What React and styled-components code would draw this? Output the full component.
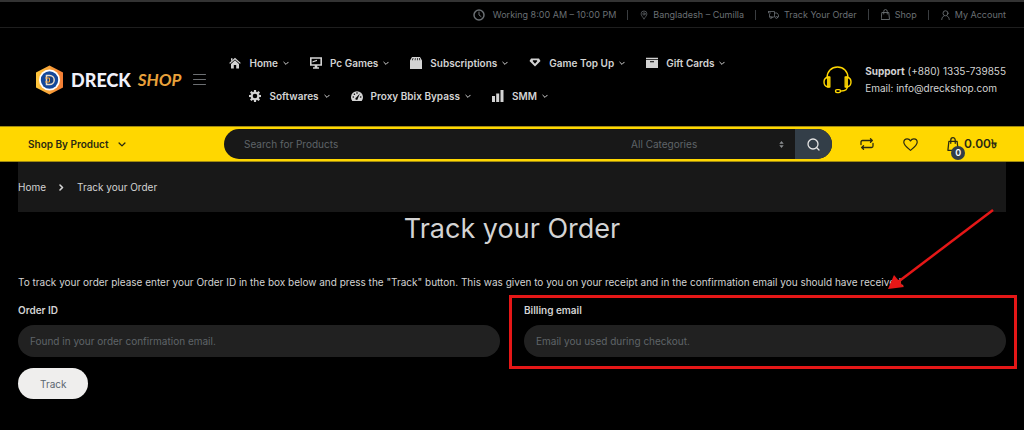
import React from 'react';
import styled, { createGlobalStyle } from 'styled-components';

const COLORS = {
  black: '#000',
  yellow: '#ffd700',
  gold: '#a08a10',
  panel: '#181818',
  field: '#212121',
  line: '#1e1e1e',
  slate: '#333e48',
  muted: '#5f6468',
  text: '#d3d3d3',
  dark: '#2a2a12',
  red: '#e51717',
};

const GlobalStyle = createGlobalStyle`
  * {
    box-sizing: border-box;
  }

  body {
    margin: 0;
    background-color: ${COLORS.black};
    color: ${COLORS.text};
    font-family: Inter, "Liberation Sans", sans-serif;
    font-size: 10px;
    line-height: 16px;
  }

  a {
    color: inherit;
    text-decoration: none;
  }

  svg {
    display: block;
    flex-shrink: 0;
  }

  button, input, select {
    font-family: inherit;
    font-size: inherit;
    margin: 0;
  }
`;

const TopBar = styled.div`
  display: flex;
  justify-content: flex-end;
  align-items: center;
  height: 28px;
  padding: 0 18px;
  border-top: 2px solid #333;
  border-bottom: 1px solid ${COLORS.line};
  color: #6a6f73;
  font-size: 9px;
`;

const TopItem = styled.a`
  display: flex;
  align-items: center;
  gap: ${({ wide }) => wide ? 8 : 5}px;

  & + & {
    margin-left: 11px;
    padding-left: 12px;
    border-left: 1px solid #3a3d40;
    line-height: 10px;
  }
`;

const Masthead = styled.header`
  display: flex;
  align-items: center;
  height: 98px;
  padding: 5px 18px 0;
`;

const Logo = styled.a`
  display: flex;
  align-items: center;
  margin-left: 17px;
  line-height: 30px;
`;

const LogoName = styled.span`
  margin-left: 7px;
  color: #f1f1fa;
  font-family: Lato, sans-serif;
  font-size: 18px;
  font-weight: 900;
`;

const LogoShop = styled.span`
  margin-left: 7px;
  color: #e9a23b;
  font-family: Lato, sans-serif;
  font-size: 17px;
  font-style: italic;
  font-weight: 700;
`;

const MenuButton = styled.button`
  display: flex;
  margin-left: 12px;
  padding: 0;
  border: 0;
  background: none;
  color: #6c6f72;
`;

const Nav = styled.nav`
  display: grid;
  gap: 17px;
  margin-left: 23px;
`;

const NavRow = styled.ul`
  display: flex;
  gap: 21px;
  margin: 0;
  padding: 0 0 0 ${({ indent }) => indent ? 20 : 0}px;
  list-style: none;
`;

const NavLink = styled.a`
  display: flex;
  align-items: center;
  font-weight: 600;

  span {
    margin: 0 5px 0 8px;
  }
`;

const Support = styled.div`
  display: flex;
  align-items: center;
  gap: 13px;
  margin-left: auto;

  svg {
    color: ${COLORS.yellow};
  }

  p {
    margin: 0;
    line-height: 17px;
  }
`;

const ActionBar = styled.div`
  display: flex;
  align-items: center;
  height: 36px;
  padding: 0 27px 0 28px;
  border-top: 1px solid ${COLORS.gold};
  border-bottom: 1px solid ${COLORS.gold};
  background-color: ${COLORS.yellow};
  color: ${COLORS.dark};
`;

const Departments = styled.button`
  display: flex;
  align-items: center;
  justify-content: space-between;
  width: 98px;
  padding: 0;
  border: 0;
  background: none;
  color: inherit;
  font-weight: 600;
`;

const Search = styled.form`
  display: flex;
  flex: 1;
  height: 30px;
  margin: 0 28px 0 98px;
  overflow: hidden;
  border-radius: 15px;
  background-color: ${COLORS.panel};
`;

const SearchInput = styled.input`
  flex: 1;
  min-width: 0;
  padding: 0 20px;
  border: 0;
  background: none;
  color: ${COLORS.muted};

  &::placeholder {
    color: ${COLORS.muted};
    opacity: 1;
  }
`;

const Category = styled.div`
  display: flex;
  align-items: center;
  width: 164px;
  padding-right: 11px;
  color: ${COLORS.muted};
`;

const CategorySelect = styled.select`
  flex: 1;
  padding: 0;
  border: 0;
  appearance: none;
  background: none;
  color: inherit;
`;

const SearchButton = styled.button`
  display: flex;
  align-items: center;
  justify-content: center;
  width: 37px;
  padding: 0;
  border: 0;
  background-color: ${COLORS.slate};
  color: #e4e4e4;
`;

const Actions = styled.div`
  display: flex;
  align-items: center;
  gap: 29px;
`;

const Cart = styled.a`
  position: relative;
  display: flex;
  align-items: center;
  gap: 5px;
  font-size: 12px;
  font-weight: 600;
`;

const CartCount = styled.span`
  position: absolute;
  top: 10px;
  left: 4px;
  width: 14px;
  height: 14px;
  border-radius: 50%;
  background-color: ${COLORS.slate};
  color: #fff;
  font-size: 9px;
  line-height: 14px;
  text-align: center;
`;

const Page = styled.main`
  position: relative;
  padding: 0 18px 30px;
`;

const Breadcrumb = styled.nav`
  display: flex;
  align-items: center;
  gap: 13px;
  height: 50px;
  background-color: ${COLORS.panel};
`;

const Title = styled.h1`
  margin: 0;
  font-size: 27px;
  font-weight: 400;
  line-height: 34px;
  text-align: center;
`;

const Intro = styled.p`
  margin: 28px 0 12px;
`;

const Fields = styled.div`
  display: grid;
  grid-template-columns: 1fr 1fr;
  gap: 24px;
`;

const Field = styled.div`
  position: relative;
  display: grid;
  gap: 7px;

  label {
    font-weight: 600;
  }
`;

const FieldInput = styled.input`
  width: 100%;
  height: 32px;
  padding: 0 12px;
  border: 0;
  border-radius: 16px;
  background-color: ${COLORS.field};
  color: ${COLORS.text};

  &::placeholder {
    color: ${COLORS.muted};
    opacity: 1;
  }
`;

const Highlight = styled.div`
  position: absolute;
  inset: -7px -11px -12px -15px;
  border: 3px solid ${COLORS.red};
  pointer-events: none;
`;

const Arrow = styled.svg`
  position: absolute;
  top: 46px;
  right: 28px;
  pointer-events: none;
`;

const TrackButton = styled.button`
  height: 31px;
  margin-top: 11px;
  padding: 0 22px;
  border: 0;
  border-radius: 16px;
  background-color: #efeeed;
  color: #5a6670;
`;

const Line = ({ w = 12, h = w, box = '0 0 24 24', stroke = 2, children }) => (
  <svg width={w} height={h} viewBox={box} fill="none" stroke="currentColor" strokeWidth={stroke} strokeLinecap="round" strokeLinejoin="round" aria-hidden="true">
    {children}
  </svg>
);

const Solid = ({ children }) => (
  <svg width="12" height="12" viewBox="0 0 12 12" fill="currentColor" aria-hidden="true">
    {children}
  </svg>
);

const Chevron = ({ size = 6 }) => (
  <Line w={size} h={size} box="0 0 6 6" stroke={1}>
    <path d="M.8 2.2 3 4.4l2.2-2.2" />
  </Line>
);

const ClockIcon = () => (
  <Line><circle cx="12" cy="12" r="10" strokeWidth="3" /><path d="M12 6v6l4 3" /></Line>
);

const PinIcon = () => (
  <Line w={8} h={10} box="0 0 18 20" stroke={1.6}>
    <path d="M9 18.500C5.500 14 2.500 11 2.500 7.500a6.500 6.500 0 0 1 13 0C15.500 11 12.500 14 9 18.500z" />
    <circle cx="9" cy="7.500" r="2.600" />
  </Line>
);

const TruckIcon = () => (
  <Line w={11} h={8} box="0 0 22 16" stroke={1.6}>
    <path d="M1 1h12v11H8M13 4h5l3 4v4h-2M1 1v3h4M3 7v5h1" />
    <circle cx="6" cy="13" r="2" />
    <circle cx="17" cy="13" r="2" />
  </Line>
);

const BagIcon = ({ w = 9, h = 11, stroke = 1.8 }) => (
  <Line w={w} h={h} box="0 0 18 22" stroke={stroke}>
    <path d="M2.500 7h13l1.500 14H1zM5.500 10V5a3.500 4 0 0 1 7 0v5" />
  </Line>
);

const UserIcon = () => (
  <Line w={9} h={10} box="0 0 18 20" stroke={1.8}>
    <circle cx="9" cy="6.500" r="5" />
    <path d="M1.500 19c.5-4 2-6 4.500-7M16.500 19c-.5-4-2-6-4.500-7" />
  </Line>
);

const HomeIcon = () => (
  <Solid>
    <path d="M6 .8 11.800 6l-.8.8-5-4.400-5 4.400L.2 6zM2 1.200h1.500v1.500L2 4z" />
    <path d="M6 3.300 10 6.900V11.500H7.200V8H4.800v3.500H2V6.900z" />
  </Solid>
);

const MonitorIcon = () => (
  <Solid>
    <path fillRule="evenodd" d="M0 .2h12v8.600H7.300v1.400H9v1.500H3v-1.500h1.700V8.800H0zM1.600 1.800v5.400h8.800V1.800z" />
    <path d="M2.500 4.300 7 2.700v1.200L2.500 5.500z" />
  </Solid>
);

const PouchIcon = () => (
  <Solid>
    <path fillRule="evenodd" d="M2 0h8l2 3.500V12H0V3.500zM2.800 1 2 3.200h.8L3.500 1zm2.200 0-.3 2.200h.8V1zm2 0v2.200h.8L7.600 1zm1.900 0 .6 2.200h.8L9.600 1z" />
  </Solid>
);

const GemIcon = () => (
  <Solid>
    <path fillRule="evenodd" d="M2 1.500h8l1.500 2.500L6 9.500.5 4zM4.200 3.200 3.600 4 6 6.700 8.400 4l-.6-.8z" />
  </Solid>
);

const BoxIcon = () => (
  <Solid>
    <path fillRule="evenodd" d="M0 .8h12v1.400H0zM0 3h12v8H0zm4 1.200v1h4v-1z" />
  </Solid>
);

const GearIcon = () => (
  <Solid>
    <circle cx="6" cy="6" r="3.300" fill="none" stroke="currentColor" strokeWidth="2" />
    <path d="M5 0h2l.3 2.200H4.700zM5 12h2l.3-2.200H4.700zM0 5v2l2.200.3V4.700zM12 5v2l-2.200.3V4.700zM1 2.500 2.500 1l1.800 1.400-1.900 1.900zM11 2.500 9.500 1 7.700 2.400l1.900 1.900zM1 9.500 2.500 11l1.800-1.400-1.900-1.900zM11 9.500 9.500 11 7.700 9.600l1.900-1.900z" />
  </Solid>
);

const GaugeIcon = () => (
  <Solid>
    <path d="M1.300 11A6 6 0 1 1 10.700 11z" />
    <g fill="#000">
      <circle cx="2.300" cy="7" r=".8" />
      <circle cx="3.400" cy="4.200" r=".8" />
      <circle cx="6" cy="3" r=".8" />
      <circle cx="9.700" cy="7" r=".8" />
      <path d="m8.900 3.500-3.600 4a1.200 1.200 0 1 0 1.500 1z" />
    </g>
  </Solid>
);

const BarsIcon = () => (
  <Solid>
    <path d="M0 6h3v6H0zM4.200 3.500h3V12h-3zM8.500 0h3v12h-3z" />
  </Solid>
);

const HeadsetIcon = () => (
  <Line w={29} h={28} box="0 0 29 28" stroke={1.4}>
    <path d="M4 12C4 5.500 8.500 1 14.500 1S25 5.500 25 12M24.500 20c0 3.500-2 5-6 5" />
    <path d="M5 11v10C2.500 20.500 1 18.500 1 16s1.500-4.500 4-5zM24 11v10c2.500-.5 4-2.500 4-5s-1.500-4.500-4-5z" />
    <path d="M5 11h1.800v10H5zM22.200 11H24v10h-1.800z" />
    <rect x="12.500" y="23.600" width="5" height="3" rx="1.500" />
  </Line>
);

const LogoMark = () => (
  <svg width="29" height="30" viewBox="0 0 29 30" aria-hidden="true">
    <defs>
      <linearGradient id="mark">
        <stop offset="0" stopColor="#ffc83c" />
        <stop offset="1" stopColor="#f47c35" />
      </linearGradient>
    </defs>
    <path d="M14.500.5 28 7.500v15l-13.500 7-13.500-7v-15z" fill="url(#mark)" />
    <circle cx="14.500" cy="15" r="10.500" fill="#fff" />
    <circle cx="14.500" cy="15" r="8.700" fill="#14489b" />
    <path d="M11.500 10.500h3.200a4.500 4.500 0 0 1 0 9h-3.200z" fill="#173d7c" stroke="#e8dccb" strokeWidth="1.500" />
    <path d="M10 13h4.500v4H10" fill="none" stroke="#f0a23a" strokeWidth="1" />
  </svg>
);

const MENU = [
  [
    { label: 'Home', Icon: HomeIcon },
    { label: 'Pc Games', Icon: MonitorIcon },
    { label: 'Subscriptions', Icon: PouchIcon },
    { label: 'Game Top Up', Icon: GemIcon },
    { label: 'Gift Cards', Icon: BoxIcon },
  ],
  [
    { label: 'Softwares', Icon: GearIcon },
    { label: 'Proxy Bbix Bypass', Icon: GaugeIcon },
    { label: 'SMM', Icon: BarsIcon },
  ],
];

const App = () => (
  <>
    <GlobalStyle />
    <TopBar>
      <TopItem href="#hours" wide={1}><ClockIcon />Working 8:00 AM – 10:00 PM</TopItem>
      <TopItem href="#store"><PinIcon />Bangladesh – Cumilla</TopItem>
      <TopItem href="#track"><TruckIcon />Track Your Order</TopItem>
      <TopItem href="#shop"><BagIcon />Shop</TopItem>
      <TopItem href="#account"><UserIcon />My Account</TopItem>
    </TopBar>
    <Masthead>
      <Logo href="#home">
        <LogoMark />
        <LogoName>DRECK</LogoName>
        <LogoShop>SHOP</LogoShop>
      </Logo>
      <MenuButton aria-label="Menu">
        <Line w={13} h={11} box="0 0 13 11" stroke={1}>
          <path d="M.5.5h12M.5 5.500h12M.5 10.500h12" />
        </Line>
      </MenuButton>
      <Nav>
        {MENU.map((row, i) => (
          <NavRow key={i} indent={i > 0 ? 1 : 0}>
            {row.map(({ label, Icon }) => (
              <li key={label}>
                <NavLink href="#menu"><Icon /><span>{label}</span><Chevron /></NavLink>
              </li>
            ))}
          </NavRow>
        ))}
      </Nav>
      <Support>
        <HeadsetIcon />
        <div>
          <p><strong>Support</strong> (+880) 1335-739855</p>
          <p>Email: info@dreckshop.com</p>
        </div>
      </Support>
    </Masthead>
    <ActionBar>
      <Departments>Shop By Product<Chevron size={8} /></Departments>
      <Search>
        <SearchInput type="text" aria-label="Search for Products" placeholder="Search for Products" />
        <Category>
          <CategorySelect aria-label="Category">
            <option>All Categories</option>
          </CategorySelect>
          <svg width="5" height="7" viewBox="0 0 5 7" fill="#8a8d90" aria-hidden="true">
            <path d="M2.500 0 4.700 2.800H.3zM2.500 7 4.700 4.200H.3z" />
          </svg>
        </Category>
        <SearchButton type="button" aria-label="Search">
          <Line w={13} box="0 0 13 13" stroke={1.3}>
            <circle cx="6" cy="6" r="5" />
            <path d="m9.800 9.800 2.200 2.200" />
          </Line>
        </SearchButton>
      </Search>
      <Actions>
        <a href="#compare" aria-label="Compare">
          <Line w={14} h={12} box="0 0 14 12" stroke={1.3}>
            <path d="M1 6.500V4q0-1.500 1.500-1.500H12M10.500.8 12.300 2.500 10.500 4.200M13 5.500V8q0 1.500-1.500 1.500H2M3.500 7.800 1.700 9.500l1.800 1.700" />
          </Line>
        </a>
        <a href="#wishlist" aria-label="Wishlist">
          <Line w={15} h={13} box="0 0 15 13" stroke={1.2}>
            <path d="M7.500 12.300C3.500 9 .8 7 .8 4.200.8 2.200 2.300.8 4.100.8c1.500 0 2.700.8 3.400 2.100C8.200 1.600 9.400.8 10.900.8c1.800 0 3.300 1.400 3.300 3.400 0 2.800-2.700 4.800-6.700 8.100z" />
          </Line>
        </a>
        <Cart href="#cart">
          <BagIcon w={12} h={14} stroke={2} />
          <CartCount>0</CartCount>
          0.00৳
        </Cart>
      </Actions>
    </ActionBar>
    <Page>
      <Breadcrumb aria-label="Breadcrumb">
        <a href="#home">Home</a>
        <Line w={5} h={7} box="0 0 5 7" stroke={1.6}>
          <path d="M1 1l2.500 2.500L1 6" />
        </Line>
        <span>Track your Order</span>
      </Breadcrumb>
      <Title>Track your Order</Title>
      <Intro>
        To track your order please enter your Order ID in the box below and press the "Track" button. This was given to you on your receipt and in the confirmation email you should have received.
      </Intro>
      <form>
        <Fields>
          <Field>
            <label htmlFor="order-id">Order ID</label>
            <FieldInput id="order-id" type="text" placeholder="Found in your order confirmation email." />
          </Field>
          <Field>
            <label htmlFor="billing-email">Billing email</label>
            <FieldInput id="billing-email" type="email" placeholder="Email you used during checkout." />
            <Highlight />
          </Field>
        </Fields>
        <TrackButton type="button">Track</TrackButton>
      </form>
      <Arrow width="110" height="84" viewBox="0 0 110 84" aria-hidden="true">
        <path d="M107 2 12 74" stroke={COLORS.red} strokeWidth="2.500" />
        <path d="M2 81 8 67l10 12z" fill={COLORS.red} />
      </Arrow>
    </Page>
  </>
);

export default App;
